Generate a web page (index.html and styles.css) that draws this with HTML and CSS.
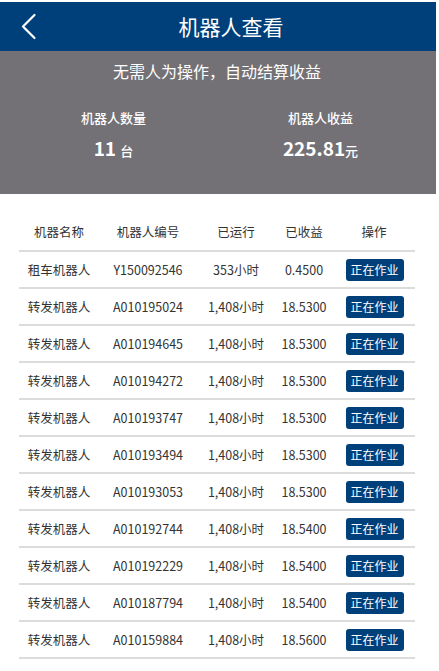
FILE: index.html
```html
<!DOCTYPE html>
<html lang="zh">
<head>
<meta charset="utf-8">
<title>机器人查看</title>
<link rel="stylesheet" href="styles.css">
</head>
<body>
<div class="page">
  <header class="topbar">
    <a class="back" href="#">
      <svg width="56" height="49" viewBox="0 0 56 49"><polyline points="34.5,13 23,24.5 34.5,36" fill="none" stroke="#fff" stroke-width="2.2" stroke-linecap="round" stroke-linejoin="round"/></svg>
    </a>
    <h1 class="title">机器人查看</h1>
    <span class="spacer"></span>
  </header>
  <section class="summary">
    <p class="slogan">无需人为操作，自动结算收益</p>
    <div class="stats">
      <div class="stat">
        <div class="stat-label">机器人数量</div>
        <div class="stat-value">11 <span class="unit">台</span></div>
      </div>
      <div class="stat">
        <div class="stat-label">机器人收益</div>
        <div class="stat-value">225.81<span class="unit">元</span></div>
      </div>
    </div>
  </section>
  <div class="table">
    <div class="row head"><span>机器名称</span><span>机器人编号</span><span>已运行</span><span>已收益</span><span>操作</span></div>
    <div class="row"><span>租车机器人</span><span>Y150092546</span><span>353小时</span><span>0.4500</span><span><b class="btn">正在作业</b></span></div>
    <div class="row"><span>转发机器人</span><span>A010195024</span><span>1,408小时</span><span>18.5300</span><span><b class="btn">正在作业</b></span></div>
    <div class="row"><span>转发机器人</span><span>A010194645</span><span>1,408小时</span><span>18.5300</span><span><b class="btn">正在作业</b></span></div>
    <div class="row"><span>转发机器人</span><span>A010194272</span><span>1,408小时</span><span>18.5300</span><span><b class="btn">正在作业</b></span></div>
    <div class="row"><span>转发机器人</span><span>A010193747</span><span>1,408小时</span><span>18.5300</span><span><b class="btn">正在作业</b></span></div>
    <div class="row"><span>转发机器人</span><span>A010193494</span><span>1,408小时</span><span>18.5300</span><span><b class="btn">正在作业</b></span></div>
    <div class="row"><span>转发机器人</span><span>A010193053</span><span>1,408小时</span><span>18.5300</span><span><b class="btn">正在作业</b></span></div>
    <div class="row"><span>转发机器人</span><span>A010192744</span><span>1,408小时</span><span>18.5400</span><span><b class="btn">正在作业</b></span></div>
    <div class="row"><span>转发机器人</span><span>A010192229</span><span>1,408小时</span><span>18.5400</span><span><b class="btn">正在作业</b></span></div>
    <div class="row"><span>转发机器人</span><span>A010187794</span><span>1,408小时</span><span>18.5400</span><span><b class="btn">正在作业</b></span></div>
    <div class="row"><span>转发机器人</span><span>A010159884</span><span>1,408小时</span><span>18.5600</span><span><b class="btn">正在作业</b></span></div>
  </div>
</div>
</body>
</html>
```
FILE: styles.css
```css
html, body {
  margin: 0;
  padding: 0;
  background: #fff;
}
body {
  font-family: "Noto Sans CJK SC", "Noto Sans", sans-serif;
  color: #333;
}
.page {
  width: 436px;
  padding-top: 2px;
}
.topbar {
  display: grid;
  grid-template-columns: 56px 1fr 30px;
  align-items: center;
  height: 49px;
  background: #00407a;
  overflow: hidden;
}
.back {
  display: block;
  height: 49px;
}
.back svg {
  display: block;
}
.title {
  margin: 0;
  text-align: center;
  color: #fff;
  font-size: 21px;
  font-weight: 400;
  line-height: 49px;
  height: 49px;
}
.summary {
  box-sizing: border-box;
  height: 143px;
  overflow: hidden;
  background: #737176;
  color: #fff;
  padding: 8px 12px 0 10px;
}
.slogan {
  margin: 0;
  height: 24px;
  text-align: center;
  font-size: 16px;
  line-height: 24px;
}
.stats {
  display: grid;
  grid-template-columns: 1fr 1fr;
  margin-top: 25px;
}
.stat {
  text-align: center;
}
.stat-label {
  height: 20px;
  font-size: 13px;
  line-height: 20px;
  font-weight: 500;
}
.stat-value {
  margin-top: 6px;
  height: 28px;
  font-size: 19px;
  line-height: 28px;
  font-weight: 700;
}
.unit {
  font-size: 13px;
  font-weight: 500;
}
.table {
  margin: 20px 0 0 19px;
  width: 396px;
}
.row {
  display: grid;
  grid-template-columns: 80px 98px 78px 58px 82px;
  align-items: center;
  height: 35px;
  border-bottom: 2px solid #dcdcdc;
  font-size: 12.5px;
  line-height: 16px;
  text-align: center;
}
.row.head {
  height: 36px;
  font-size: 12.5px;
}
.btn {
  display: inline-block;
  width: 58px;
  height: 22px;
  line-height: 22px;
  border-radius: 3px;
  background: #00407a;
  color: #fff;
  font-weight: 400;
  font-size: 12px;
  margin-left: 1px;
  vertical-align: middle;
}
```
